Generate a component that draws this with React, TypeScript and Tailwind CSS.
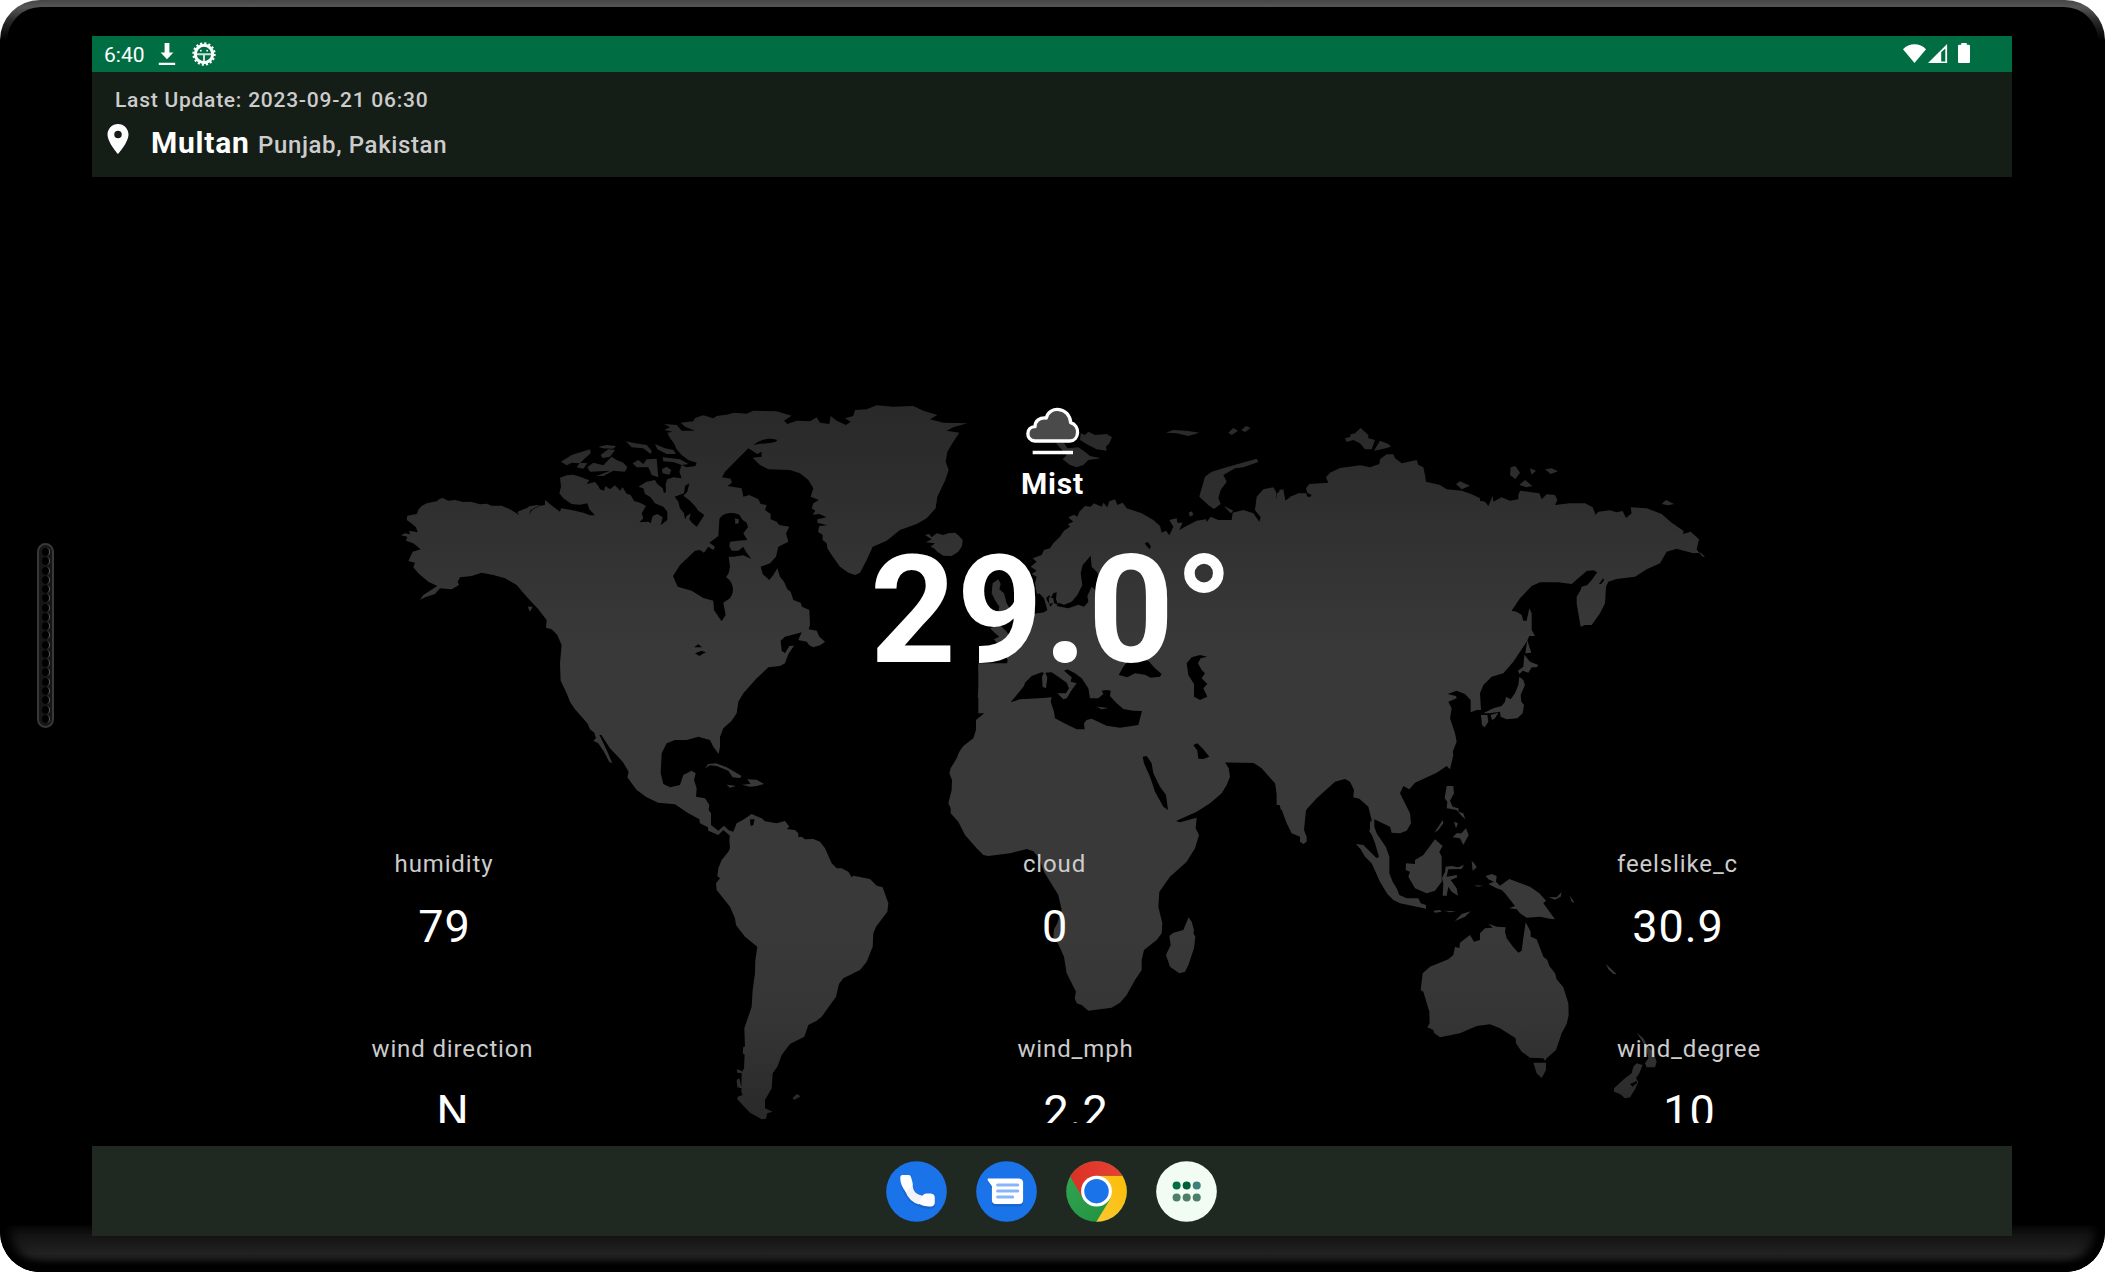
import React from "react";

type Piece = { d: string; water?: boolean };

/* Each sheet is a part of the map drawn at three times its final size. */
const northAmerica: Piece[] = [
  { d: "M82 407L110 402 116 388 125 378 140 370 170 364 178 357 188 354 205 362 225 360 250 366 272 365 300 373 320 371 335 377 365 377 390 388 418 405 412 396 425 390 440 385 448 379 470 375 485 377 495 374 495 360 520 380 540 395 543 385 575 390 610 398 630 406 645 406 628 388 622 370 600 374 575 372 550 355 538 340 543 320 540 293 560 286 580 284 600 290 628 301 620 312 645 306 655 318 660 328 672 332 676 318 690 328 705 316 720 332 728 322 740 341 752 345 762 363 780 368 798 378 785 400 790 415 778 427 805 425 812 430 818 408 832 402 848 412 842 436 862 420 862 395 850 380 825 370 812 352 795 342 790 325 775 320 800 305 825 300 832 312 848 325 852 340 858 335 857 312 862 298 880 292 905 295 898 275 905 255 920 262 946 258 950 248 925 240 905 225 890 208 882 190 870 175 862 158 878 155 853 150 870 142 853 132 890 135 905 152 945 152 915 140 902 128 940 124 945 114 970 106 1000 115 1010 108 1040 104 1062 98 1100 101 1120 92 1190 94 1235 107 1212 122 1222 132 1250 122 1290 124 1310 112 1320 128 1348 132 1352 108 1370 122 1398 135 1412 125 1395 115 1420 108 1425 90 1460 88 1490 76 1540 80 1600 78 1630 92 1672 105 1650 118 1690 128 1762 130 1720 142 1700 152 1738 158 1720 185 1702 215 1697 245 1706 270 1696 300 1672 350 1667 385 1640 415 1610 432 1560 450 1520 482 1478 500 1460 540 1440 578 1425 585 1405 578 1380 560 1355 525 1342 505 1340 490 1328 480 1328 465 1314 455 1318 438 1342 436 1312 428 1312 418 1340 412 1318 402 1298 404 1306 392 1295 385 1300 370 1316 360 1292 350 1300 325 1285 300 1260 280 1230 270 1165 268 1140 255 1118 233 1145 230 1145 215 1132 222 1105 205 1070 240 1035 275 1026 292 1052 296 1056 308 1042 318 1085 325 1090 350 1108 345 1135 358 1142 372 1160 375 1155 390 1172 402 1172 418 1190 425 1198 435 1228 440 1218 460 1225 485 1195 500 1188 530 1170 550 1142 560 1148 582 1168 600 1180 585 1192 565 1200 590 1212 605 1222 628 1232 635 1240 660 1262 668 1266 680 1288 690 1290 735 1286 748 1310 752 1318 770 1335 785 1322 795 1300 802 1288 796 1280 785 1255 780 1265 757 1215 770 1202 782 1205 812 1215 820 1228 798 1242 797 1225 822 1215 850 1200 858 1165 862 1130 895 1090 940 1075 965 1070 1000 1055 1022 1030 1045 1020 1070 1020 1100 1016 1122 1000 1100 990 1080 955 1070 920 1080 885 1080 860 1090 845 1120 842 1180 850 1212 870 1222 900 1215 910 1185 935 1172 947 1180 942 1200 950 1225 948 1250 975 1255 988 1275 986 1290 993 1300 993 1335 1015 1352 1032 1337 1055 1360 1050 1367 1030 1350 1015 1365 985 1352 984 1342 960 1330 958 1318 920 1297 885 1273 835 1268 800 1252 770 1230 742 1192 746 1175 728 1145 690 1105 664 1065 658 1064 680 1110 697 1150 688 1146 672 1115 655 1090 640 1082 648 1075 643 1058 630 1048 622 1030 585 988 570 965 560 940 542 902 540 850 545 795 532 765 515 748 498 743 500 720 475 688 440 650 410 615 375 595 340 585 305 578 275 588 240 592 233 605 237 615 215 628 180 625 165 642 135 652 120 660 130 645 172 618 145 605 115 580 100 562 105 548 85 543 98 515 122 508 100 490 78 482 82 470 63 466 75 460 90 463 88 452 113 457 108 442 92 428 80 420Z" },
  { d: "M543 245L575 225 630 208 632 220 615 235 600 250 575 248 560 256ZM590 262L600 248 622 250 610 266ZM655 200L680 195 708 198 700 206 668 205ZM662 225L685 208 705 210 690 230 668 234ZM622 262L640 248 670 256 695 230 710 240 730 248 742 262 735 275 700 272 670 288 650 288 690 272 630 275ZM738 184L765 190 800 195 815 212 812 222 790 205 755 202ZM758 250L775 240 790 252 800 238 830 236 835 292 815 285 805 262 770 262ZM825 192L855 205 880 210 888 222 860 222 832 208ZM848 232L900 238 925 252 905 255 880 246 850 244ZM846 268L860 260 874 270 868 284 848 280Z" },
  { d: "M884 350L912 340 915 318 928 310 922 335 910 347 930 362 945 378 955 392 973 405 962 422 950 440 936 428 928 418 932 400 920 408 915 418 912 400 900 385 895 365Z", water: true },
  { d: "M1120 195C1140 180 1165 170 1192 180C1185 192 1150 188 1120 195Z", water: true },
  { d: "M1018 420C1022 400 1055 394 1078 404L1088 420 1100 428 1104 442 1090 460 1102 480 1075 482 1050 485 1048 498 1055 512 1075 512 1090 500 1098 515 1114 537 1090 526 1060 530 1046 530 1050 560 1046 580 1038 592C1060 605 1066 635 1050 655L1030 668 1037 705 1025 724 1014 708 1002 690 1000 662 970 654 935 632 893 620 879 588 900 555 945 512 960 510 972 518 985 500 1000 510 1005 500 988 488 1015 468Z", water: true },
  { d: "M443 680L458 680 450 695ZM1095 1318L1115 1302 1150 1318Z" },
  { d: "M942 802L955 793 966 802ZM945 820L965 812 978 817 968 822 958 828Z", water: true },
  { d: "M446 406L452 390 480 375 478 378 456 390Z", water: true },
  { d: "M975 1165L985 1152 1008 1150 1040 1162 1085 1188 1080 1194 1058 1192 1045 1172 1010 1158 990 1156ZM1040 1214L1068 1218 1050 1223ZM1086 1214L1112 1212 1102 1198 1130 1199 1152 1212 1130 1218 1110 1220Z" },
];

const europe: Piece[] = [
  { d: "M415 855L500 857 503 840 480 800 505 770 540 730 575 705 595 698 612 690 605 650 590 640 585 610 590 590 575 582 590 572 572 560 590 545 578 535 605 525 612 510 630 505 640 490 660 470 672 452 690 440 684 432 700 425 685 412 702 404 712 410 718 395 735 378 752 380 762 370 785 380 790 368 802 382 808 364 825 358 832 375 848 368 860 385 905 400 940 420 960 438 965 458 978 452 988 466 1000 440 988 420 1010 415 1012 428 1028 428 1018 450 1035 440 1070 422 1098 418 1100 426 1112 410 1135 420 1175 420 1178 398 1210 390 1240 400 1258 425 1262 412 1245 390 1250 350 1270 328 1300 322 1308 335 1310 358 1320 355 1318 330 1330 328 1336 362 1352 350 1375 340 1400 340 1400 1290 1323 1290 1312 1250 1305 1210 1265 1165 1240 1148 1155 1147 1100 1000 415 1000Z" },
  { d: "M752 527L728 555 722 580 727 615 712 645 695 665 672 674 655 668 650 678 685 685 715 674 732 680 745 665 742 648 755 620 768 632 790 610 770 575 755 560Z", water: true },
  { d: "M618 655L628 645 632 655 640 640 650 636 648 658 654 675 640 668 632 680ZM598 640L612 655 622 690 612 697 595 700 580 660Z", water: true },
  { d: "M914 490L924 486 933 500 928 508Z", water: true },
  { d: "M836 885L850 860 870 835 925 842 945 865 965 882 960 890 932 893 915 884 885 880 862 892Z", water: true },
  { d: "M1040 850L1055 832 1080 825 1102 830 1082 835 1074 850 1085 870 1095 880 1085 895 1102 912 1090 925 1102 950 1080 960 1062 950 1062 912 1045 885Z", water: true },
  { d: "M255 465L268 462 275 472 290 460 310 465 325 460 345 458 355 466 368 480 366 498 355 515 335 528 310 527 292 515 282 505 272 500 285 490 258 487 275 478ZM458 610L475 598 482 612 478 628 492 640 500 670 512 690 500 705 475 695 478 680 465 660 455 640ZM462 740L480 735 500 755 510 770 490 790 470 788 462 778 478 770 468 762 450 745Z" },
  { d: "M722 160L735 165 745 155 765 165 800 162 816 172 808 190 798 200 800 212 770 208 745 195 720 180ZM648 190L672 188 682 205 715 202 735 215 750 228 782 235 745 240 730 255 710 262 690 255 668 238 680 225ZM978 158L1000 150 1040 152 1078 158 1045 168 1010 160ZM1165 158L1180 144 1194 152 1175 165ZM1204 150L1218 138 1232 144 1215 156Z" },
  { d: "M1250 236L1255 246 1210 262 1185 265 1150 285 1160 305 1142 330 1135 355 1142 372 1122 387 1105 375 1078 350 1085 325 1095 290 1115 275 1165 260ZM1046 398L1056 394 1060 404 1050 410ZM1152 378L1180 392 1172 400Z" },
];

const africa: Piece[] = [
  { d: "M175 70L1060 70 1060 368 915 367 926 385 930 410 920 435 905 460 870 490 830 515 768 543 780 547 830 533 827 565 837 585 825 625 800 665 750 710 718 755 715 800 727 850 725 880 710 900 672 930 665 960 665 990 645 1020 620 1065 600 1088 575 1103 505 1112 485 1095 470 1090 464 1075 468 1055 440 1000 432 950 415 912 400 892 402 868 412 850 425 810 415 765 372 695 358 655 340 634 320 627 270 640 205 648 190 645 170 625 135 585 115 545 92 520 92 505 85 490 95 450 96 420 88 400 92 385 110 355 118 335 130 318 160 295 168 270 168 240 190 222 208 196 190 175 173 172 178 130Z" },
  { d: "M272 187L290 165 312 138 315 128 335 108 365 97 372 98 366 110 368 140 378 145 382 112 376 98 395 97 415 110 440 128 447 145 438 160 412 160 430 178 440 175 446 165 455 150 470 130 452 125 455 112 432 92 442 88 465 100 485 115 505 145 510 175 535 175 550 162 545 152 560 150 572 152 570 168 590 190 610 207 640 212 666 213 655 255 600 263 560 257 515 236 500 240 492 250 494 268 470 268 430 248 405 235 402 215 392 185 395 172 370 174 330 176 300 178Z", water: true },
  { d: "M668 350L680 348 695 370 700 400 720 440 738 465 744 510 730 500 705 455 690 410 672 370ZM820 315L832 310 850 328 868 350 850 357 835 356 832 332Z", water: true },
  { d: "M806 832L815 845 822 870 820 880 826 890 822 925 805 975 795 995 778 1000 750 980 738 945 752 915 748 888 760 878 790 870Z" },
];

const asia: Piece[] = [
  { d: "M0 1275L20 1330 35 1360 60 1370 60 1385 70 1392 80 1385 80 1370 72 1350 78 1290 110 1255 165 1205 195 1197 210 1205 222 1230 220 1252 238 1256 265 1280 275 1320 268 1355 300 1390 283 1340 283 1318 330 1340 335 1358 360 1360 380 1352 393 1330 390 1300 360 1240 370 1218 388 1228 405 1208 470 1178 500 1158 510 1168 520 1125 518 1115 530 1085 525 1060 510 1015 515 985 505 965 530 955 528 948 503 942 530 932 555 942 572 960 572 997 590 990 603 990 600 940 610 915 635 890 670 880 700 845 740 785 748 768 765 768 755 750 755 700 748 685 740 722 730 722 725 705 710 695 695 692 720 655 755 618 780 607 835 607 875 612 900 590 920 573 940 571 952 577 935 600 922 615 905 620 902 630 890 650 890 670 895 700 902 740 915 735 935 735 960 700 975 670 978 620 985 605 1010 597 1065 590 1100 568 1140 550 1160 515 1190 506 1240 520 1262 518 1275 530 1268 530 1255 515 1250 508 1257 478 1232 455 1210 462 1210 452 1175 428 1145 402 1100 385 1052 382 1055 400 1038 414 1028 393 1010 397 990 391 955 395 947 405 938 382 915 370 870 370 825 375 832 360 825 345 800 343 785 358 778 340 720 332 715 345 715 358 690 362 665 352 640 365 638 348 625 378 615 365 600 362 600 355 575 343 545 332 500 328 480 315 438 305 435 285 430 262 415 255 410 240 365 250 345 235 340 223 320 223 300 238 298 252 270 262 240 256 180 264 150 278 138 292 145 308 88 312 78 325 82 338 95 345 90 352 60 342 30 350 44 364 18 370 8 330-10 340-10 1275Z" },
  { d: "M957 612L970 594 972 602 963 612Z", water: true },
  { d: "M195 175L212 170 210 164 225 160 242 144 265 165 265 175 285 180 275 208 255 208 240 190 220 180 200 186ZM282 212L300 182 325 192 333 200 305 208ZM528 312L540 304 570 317 545 328ZM692 262L706 258 720 278 706 297 690 285ZM750 265L768 272 755 284ZM795 268L815 265 834 274 812 282ZM718 315L735 300 757 318 740 322ZM1145 372L1158 360 1182 372 1165 376Z" },
  { d: "M742 780L748 800 754 818 736 820ZM733 824L750 845 775 855 770 862 755 862 745 878 728 872 718 882 714 872 730 860ZM718 890L730 900 735 915 722 945 724 965 732 975 728 1000 712 1015 680 1018 662 1010 660 995 628 1000 610 1000 640 985 665 978 675 965 678 950 692 958 705 940 715 915ZM632 1005L655 998 645 1015 636 1020ZM603 1005L622 1005 625 1025 614 1042 606 1035Z" },
];

const oceania: Piece[] = [
  { d: "M210 240L222 270 240 295 258 322 268 350 268 400 278 425 290 445 298 465 320 475 355 475 362 490 378 495 378 506 350 500 300 490 280 480 262 462 240 425 215 370 195 350 182 328 168 312 190 315 230 355 237 350 225 310 210 270Z" },
  { d: "M405 298L428 318 418 335 425 350 425 425 405 452 380 460 345 445 325 410 330 395 317 390 318 370 345 372 345 360 370 345 390 318ZM435 395L437 380 455 378 475 382 492 374 485 387 445 388 440 410 470 405 472 412 452 420 470 445 474 467 455 455 445 440 440 467 428 467 430 430 426 415ZM515 362L524 372 530 382 518 392ZM400 512L420 510 425 515 405 518ZM432 512L468 514 450 517ZM465 543L485 522 512 514 495 530ZM522 436L550 437 535 440Z" },
  { d: "M557 408L575 402 590 408 588 425 600 437 628 417 690 440 718 460 738 482 730 490 765 538 750 536 720 530 680 533 660 520 650 508 628 505 645 498 635 485 615 460 605 450 590 445 565 432 582 425 565 418ZM746 472L770 472 785 456 782 470 765 479ZM808 466L824 488 815 485ZM918 672L950 703 940 702 925 688Z" },
  { d: "M440 138L460 138 462 160 450 182 458 200 475 205 476 215 490 220 496 238 485 228 470 210 440 205 442 185 434 175ZM403 278L428 240 430 250 415 270ZM462 245L474 250 468 265ZM458 292L470 280 484 280 498 265 506 285 490 315 480 295Z" },
  { d: "M677 547L692 575 692 590 710 598 730 650 742 660 748 678 765 700 770 718 790 742 805 790 806 825 800 852 785 880 768 930 740 955 735 962 730 955 690 953 665 935 648 910 647 895 600 865 570 853 530 858 480 880 420 892 403 880 400 870 382 862 389 850 388 815 370 755 362 750 368 700 390 680 445 658 460 645 465 620 478 625 480 608 510 585 522 605 540 600 540 580 555 565 578 563 565 551 590 560 617 562 615 575 620 595 640 622 655 638 665 632 672 580ZM700 968L738 968 738 990 725 1014 710 1000Z" },
  { d: "M1010 878L1030 895 1040 915 1060 935 1070 965 1065 982 1040 982 1035 970 1045 955 1038 925 1025 900ZM1010 970L1028 975 1018 1000 1008 1015 1015 1025 1005 1048 990 1072 975 1075 960 1062 942 1055 942 1045 975 1015 995 1000 1000 980Z" },
  { d: "M990 1032L1012 1022 1010 1030 998 1040Z", water: true },
];

const southAmerica: Piece[] = [
  { d: "M262 150L270 152 280 155 290 130 308 120 335 103 330 122 332 138 340 135 345 112 365 115 375 124 410 130 435 123 448 140 440 147 465 150 475 160 475 172 485 170 495 178 520 177 540 185 555 205 575 250 590 265 605 265 625 275 635 292 640 287 690 297 710 317 728 322 738 350 745 370 742 395 708 440 700 460 698 500 680 545 660 570 610 595 597 612 588 650 545 710 530 722 505 735 493 770 450 792 425 825 412 860 398 880 395 925 375 960 375 985 398 995 382 1000 378 1016 365 1018 330 998 292 958 293 950 308 945 304 935 305 880 312 865 315 800 313 745 335 680 338 630 345 580 346 540 352 500 315 470 288 435 285 415 270 380 230 330 228 310 240 295 232 288 235 265 245 240 265 215 270 205 268 180 270 165ZM290 868L305 872 308 880 292 878ZM290 900L298 895 305 925 292 922ZM310 800L322 798 315 825 308 820ZM458 955L470 942 482 949 462 960Z" },
];

const sheets = [
  { t: "translate(380 380) scale(.33333)", pieces: northAmerica },
  { t: "translate(840 380) scale(.33333)", pieces: europe },
  { t: "translate(920 640) scale(.33333)", pieces: africa },
  { t: "translate(1280 380) scale(.33333)", pieces: asia },
  { t: "translate(1300 740) scale(.33333)", pieces: oceania },
  { t: "translate(640 780) scale(.33333)", pieces: southAmerica },
];

/* Small islands that lie inside seas, in the final map's coordinates. */
const islets = "M1096.700 706.700L1108.300 708 1101.700 709.300ZM735 518.300L738.700 519.300 738.700 523.300 735.300 524ZM1048.700 597.300L1053.300 598.300 1054 602.700 1049.300 604ZM1044 628L1045.500 627 1045 630Z";

function WorldMap() {
  return (
    <svg className="absolute inset-0 h-full w-full" viewBox="92 177 1920 969">
      <defs>
        <linearGradient id="land" gradientUnits="userSpaceOnUse" x1="0" y1="405" x2="0" y2="1120">
          <stop offset="0" stopColor="#292929" />
          <stop offset=".1" stopColor="#2d2d2d" />
          <stop offset=".34" stopColor="#393939" />
          <stop offset=".74" stopColor="#393939" />
          <stop offset=".86" stopColor="#353535" />
          <stop offset="1" stopColor="#292929" />
        </linearGradient>
        <mask id="continents" maskUnits="userSpaceOnUse" x="380" y="380" width="1360" height="760">
          {sheets.map((s) => (
            <g key={s.t} transform={s.t} fill="#fff">
              {s.pieces.filter((p) => !p.water).map((p) => <path key={p.d} d={p.d} />)}
            </g>
          ))}
          {sheets.map((s) => (
            <g key={s.t} transform={s.t} fill="#000">
              {s.pieces.filter((p) => p.water).map((p) => <path key={p.d} d={p.d} />)}
            </g>
          ))}
          <path fill="#fff" d={islets} />
        </mask>
      </defs>
      <rect x="380" y="380" width="1360" height="760" fill="url(#land)" mask="url(#continents)" />
    </svg>
  );
}

function Speaker() {
  return (
    <div className="absolute left-[37px] top-[543px] flex h-[185px] w-[17px] flex-col items-center justify-between rounded-full border-2 border-[#383838] bg-[#161616] py-[3px] pl-[1px]">
      {Array.from({ length: 19 }, (_, i) => (
        <div key={i} className="h-[8px] w-[8px] shrink-0 rounded-full border-r border-[#5a5a5a] bg-black" />
      ))}
    </div>
  );
}

function StatusBar() {
  return (
    <div className="flex h-9 items-center bg-[#006e42] text-white">
      <span className="ml-[12px] w-[54px] pt-px text-[21px] leading-9">6:40</span>
      <svg className="h-6 w-[18px]" viewBox="0 0 18 24">
        <path fill="#fff" d="M6.6 1h4.8v9.5h4L9 17.2 2.6 10.5h4zM.8 20.8h16.4v2.2H.8z" />
      </svg>
      <svg className="ml-[15.5px] h-6 w-6" viewBox="-12 -12 24 24">
        <circle r="8.7" fill="none" stroke="#fff" strokeWidth="3" />
        <circle r="10.6" fill="none" stroke="#fff" strokeWidth="2.2" strokeDasharray="2.1 2.06" />
        <path d="M-8 .2H8M0 0V8.500" stroke="#fff" strokeOpacity=".8" strokeWidth="2" fill="none" />
        <circle cx="-3.200" cy="-3.300" r=".9" fill="#fff" />
        <circle cx="3.200" cy="-3.300" r=".9" fill="#fff" />
      </svg>
      <svg className="ml-auto mr-[41px] h-6 w-[69px]" viewBox="1902 42 69 24">
        <path fill="#fff" d="M1903 49.200C1909 42.600 1920 42.600 1926 49.200L1914.500 63Z" />
        <path fill="#fff" fillRule="evenodd" d="M1928 63L1947.100 44V63ZM1941.200 52.200V61.600H1945.300V48.500Z" />
        <path fill="#fff" d="M1959.300 44.800H1961.300V43H1966.700V44.800H1968.700Q1970 44.800 1970 46V61.800Q1970 63 1968.700 63H1959.300Q1958 63 1958 61.800V46Q1958 44.800 1959.300 44.800Z" />
      </svg>
    </div>
  );
}

function Header() {
  return (
    <div className="h-[105px] bg-[#151d17] pt-[13px]">
      <div className="ml-[23px] text-[21px] font-medium leading-[30px] tracking-[0.75px] text-[#cccccc]">Last Update: 2023-09-21 06:30</div>
      <div className="mt-[6px] flex">
        <svg className="ml-[8px] h-9 w-9" viewBox="0 0 24 24">
          <path fill="#fff" d="M12 2C8.130 2 5 5.130 5 9c0 5.250 7 13 7 13s7-7.750 7-13c0-3.870-3.130-7-7-7zm0 9.500a2.500 2.500 0 0 1 0-5 2.500 2.500 0 0 1 0 5z" />
        </svg>
        <div className="ml-[15px] mt-px flex items-baseline leading-[41px]">
          <span className="text-[30px] font-bold tracking-[0.75px] text-white">Multan</span>
          <span className="ml-[8.5px] text-[24px] font-medium tracking-[0.62px] text-[#cccccc]">Punjab, Pakistan</span>
        </div>
      </div>
    </div>
  );
}

function Metric({ label, value, className }: { label: string; value: string; className: string }) {
  return (
    <div className={"flex shrink-0 flex-col items-center whitespace-nowrap " + className}>
      <span className="text-[24px] leading-[36px] tracking-[0.87px] text-[#cccccc]">{label}</span>
      <span className="ml-px mt-[18px] text-[45px] leading-[54px] tracking-[0.9px] text-white">{value}</span>
    </div>
  );
}

function Weather() {
  return (
    <div className="relative h-[969px] overflow-hidden bg-black">
      <WorldMap />
      <div className="relative flex h-[946px] flex-col overflow-hidden">
        <div className="mt-[227px] flex flex-col items-center">
          <svg className="ml-[2px] h-[56px] w-[60px]" viewBox="548 70 180 168">
            <path d="M584 181C554 178 557 138 584 138C584 120 598 110 618 112C626 74 688 78 691 126C720 134 718 180 688 181Z" fill="#777777" fillOpacity=".62" stroke="#fff" strokeWidth="10" strokeLinejoin="round" />
            <path d="M577 215.500H698" stroke="#fff" strokeWidth="11" />
          </svg>
          <div className="ml-px mt-[4px] text-[30px] font-bold leading-[40px] tracking-[0.75px] text-white">Mist</div>
          <div className="mt-[22px] text-[150px] font-bold leading-[170px] tracking-[0.75px] text-white">29.0°</div>
        </div>
        <div className="mt-[150px] flex">
          <Metric label="humidity" value="79" className="ml-[302px] w-[100px]" />
          <Metric label="cloud" value="0" className="ml-[528px] w-[65px]" />
          <Metric label="feelslike_c" value="30.9" className="ml-[530px] w-[121px]" />
        </div>
        <div className="mt-[77px] flex">
          <Metric label="wind direction" value="N" className="ml-[279px] w-[163px]" />
          <Metric label="wind_mph" value="2.2" className="ml-[483px] w-[117px]" />
          <Metric label="wind_degree" value="10" className="ml-[482px] w-[146px]" />
        </div>
      </div>
    </div>
  );
}

function Dock() {
  return (
    <div className="flex h-[90px] items-center justify-center gap-[29px] bg-[#1f2922] pr-px">
      <svg className="h-[61px] w-[61px]" viewBox="79.500 92 182 182">
        <circle cx="170.500" cy="183" r="90.500" fill="#1a73e8" />
        <path transform="translate(1 7)" d="M126 134H147Q153 134 154 140L159 160 147 180Q158 193 176 205L191 190H214Q225 191 225 201V218Q223 228 210 228C160 228 122 190 122 142Q122 135 126 134Z" fill="#155cba" opacity=".55" />
        <path d="M139 182L159 160Q158 192 191 196L178 222Q148 212 137 182Z" fill="#f1f3f4" />
        <path d="M128 134H147Q153 134 154 140L159 158Q160 164 156 168L139 185C128 172 122 158 122 142Q122 135 128 134ZM176 219L189 196Q192 189 200 189H213Q225 190 225 201V218Q223 228 210 228 190 228 176 219Z" fill="#fff" />
      </svg>
      <svg className="h-[61px] w-[61px]" viewBox="349.500 92 182 182">
        <circle cx="440.500" cy="183" r="90.500" fill="#1a73e8" />
        <path d="M385 152H478Q490 152 490 163V217Q490 228 478 228H409Q397 228 397 217V176Z" fill="#155cba" opacity=".55" />
        <path d="M386 144H478Q490 145 490 156V208Q490 220 478 220H409Q397 220 397 208V167L385 150Q383 144 386 144Z" fill="#fff" />
        <path d="M414 163.500H474M414 181.500H474M414 199.500H459" stroke="#8ab4f8" strokeWidth="9" strokeLinecap="round" />
      </svg>
      <svg className="h-[61px] w-[61px]" viewBox="619.500 92 182 182">
        <defs>
          <clipPath id="disc"><circle cx="710.500" cy="183" r="90.500" /></clipPath>
          <linearGradient id="green" x1="0" y1="0" x2="1" y2="1"><stop stopColor="#34a853" /><stop offset="1" stopColor="#1e8e3e" /></linearGradient>
          <linearGradient id="red" x1="0" y1="0" x2="1" y2="0"><stop stopColor="#d93025" /><stop offset="1" stopColor="#ea4335" /></linearGradient>
          <linearGradient id="yellow" x1="1" y1="0" x2="0" y2="1"><stop stopColor="#fbbc04" /><stop offset="1" stopColor="#fcc934" /></linearGradient>
        </defs>
        <g clipPath="url(#disc)">
          <rect x="619" y="92" width="183" height="182" fill="url(#green)" />
          <path d="M710 136H810V280H706L752 205Z" fill="url(#yellow)" />
          <path d="M632 138L620 90H802V136H710L668 200Z" fill="url(#red)" />
        </g>
        <circle cx="710.500" cy="182" r="46" fill="#fff" />
        <circle cx="710.500" cy="182" r="36.500" fill="#1a73e8" />
      </svg>
      <svg className="h-[61px] w-[61px]" viewBox="889.500 92 182 182">
        <circle cx="980.500" cy="183" r="90.500" fill="#f1fcf2" />
        <circle cx="951" cy="165" r="12" fill="#006e42" />
        <circle cx="981" cy="165" r="12" fill="#005f38" />
        <circle cx="1011" cy="165" r="12" fill="#3b807c" />
        <circle cx="951" cy="201" r="12" fill="#4f7d6b" />
        <circle cx="981" cy="201" r="12" fill="#4f7d6b" />
        <circle cx="1011" cy="201" r="12" fill="#4f7d6b" />
      </svg>
    </div>
  );
}

export default function App() {
  return (
    <div className="h-[1272px] w-[2105px] overflow-hidden bg-white font-['Roboto',sans-serif]">
      <div className="relative h-full w-full overflow-hidden rounded-[40px] bg-[linear-gradient(to_bottom,#454545_0px,#565656_7px,#2c2c2c_20px,#000000_40px)]">
        <div className="absolute inset-x-[7px] bottom-0 top-[7px] rounded-t-[34px] bg-black" />
        <div className="absolute inset-x-0 bottom-0 h-[47px] rounded-b-[40px] bg-[linear-gradient(to_bottom,#0a0a0a_0px,#141414_11px,#222222_29px,#1c1c1c_34px,#000000_43px)] shadow-[inset_8px_-4px_10px_2px_#000,inset_-8px_-4px_10px_2px_#000]" />
        <Speaker />
        <div className="relative ml-[92px] mt-9 flex w-[1920px] flex-col">
          <StatusBar />
          <Header />
          <Weather />
          <Dock />
        </div>
      </div>
    </div>
  );
}
